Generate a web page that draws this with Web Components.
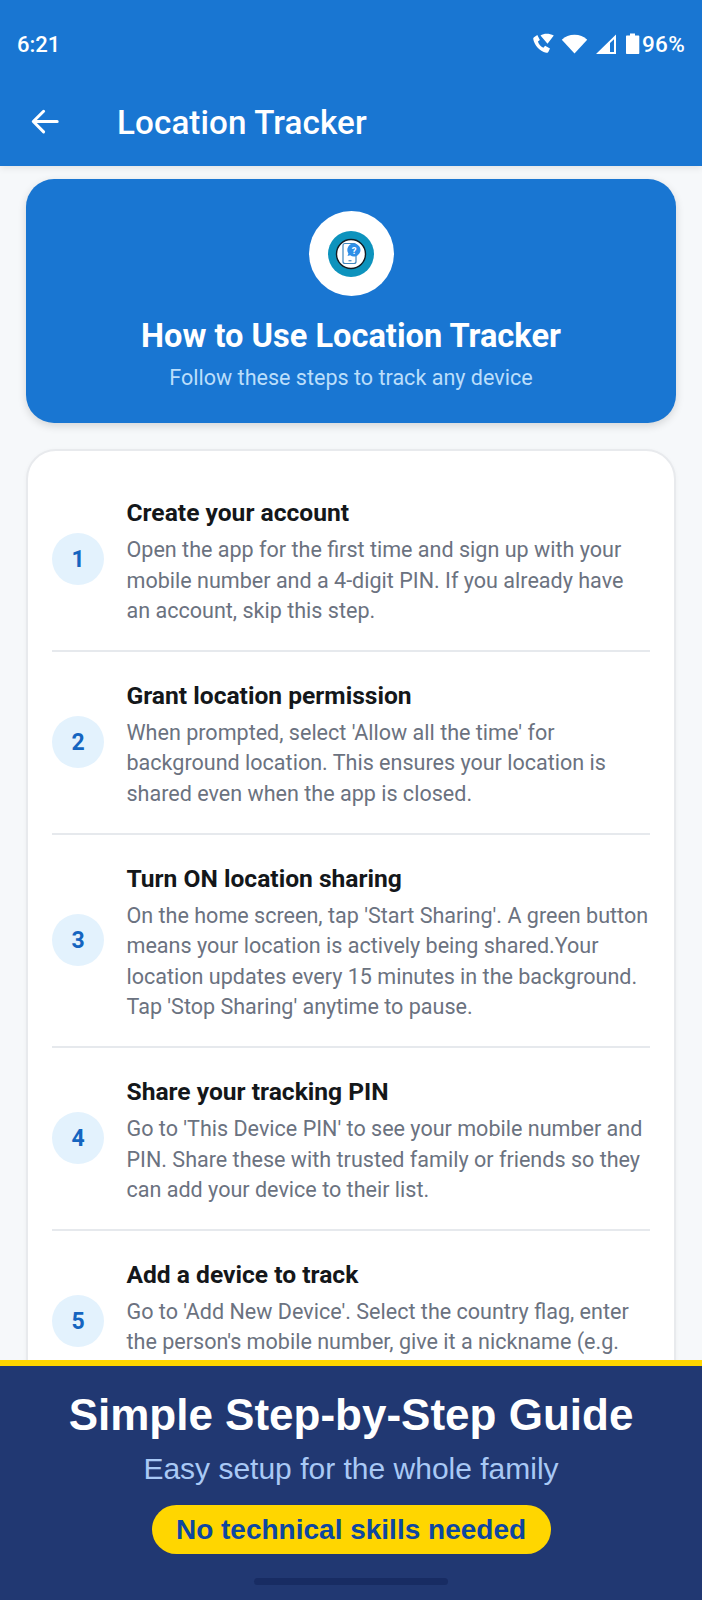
<!DOCTYPE html>
<html>
<head>
<meta charset="utf-8">
<style>
  html, body { margin: 0; padding: 0; background: #f6f8fa; }
  body { font-family: Roboto, sans-serif; width: 702px; height: 1600px; overflow: hidden; }
  #page { display: flex; flex-direction: column; height: 1600px; }
</style>
</head>
<body>
<div id="page">
  <status-bar time="6:21" battery="96%"></status-bar>
  <app-bar title="Location Tracker"></app-bar>
  <guide-content>
    <hero-card heading="How to Use Location Tracker" sub="Follow these steps to track any device"></hero-card>
    <steps-card>
      <guide-step num="1" heading="Create your account">Open the app for the first time and sign up with your mobile number and a 4-digit PIN. If you already have an account, skip this step.</guide-step>
      <guide-step num="2" heading="Grant location permission">When prompted, select 'Allow all the time' for background location. This ensures your location is shared even when the app is closed.</guide-step>
      <guide-step num="3" heading="Turn ON location sharing">On the home screen, tap 'Start Sharing'. A green button means your location is actively being shared.Your location updates every 15 minutes in the background. Tap 'Stop Sharing' anytime to pause.</guide-step>
      <guide-step num="4" heading="Share your tracking PIN">Go to 'This Device PIN' to see your mobile number and PIN. Share these with trusted family or friends so they can add your device to their list.</guide-step>
      <guide-step num="5" heading="Add a device to track">Go to 'Add New Device'. Select the country flag, enter the person's mobile number, give it a nickname (e.g.</guide-step>
    </steps-card>
  </guide-content>
  <promo-footer heading="Simple Step-by-Step Guide" sub="Easy setup for the whole family" pill="No technical skills needed"></promo-footer>
</div>

<script>
  function define(name, html) {
    const template = document.createElement('template');
    template.innerHTML = html;
    customElements.define(name, class extends HTMLElement {
      connectedCallback() {
        if (this.shadowRoot) return;
        this.attachShadow({ mode: 'open' });
        this.shadowRoot.appendChild(template.content.cloneNode(true));
        this.shadowRoot.querySelectorAll('[data-attr]').forEach((el) => {
          el.textContent = this.getAttribute(el.dataset.attr);
        });
      }
    });
  }

  define('status-bar', `
    <style>
      :host { display: flex; align-items: center; justify-content: space-between; height: 88px; padding: 0 17px; background: #1976d2; color: #fff; flex: none; box-sizing: border-box; position: relative; z-index: 2; }
      .time { font-size: 22px; font-weight: 500; }
      .icons { display: flex; align-items: center; font-size: 22.500px; font-weight: 500; letter-spacing: .3px; }
      svg { display: block; fill: #fff; }
    </style>
    <span class="time" data-attr="time"></span>
    <span class="icons">
      <!-- call + small wifi -->
      <svg width="24" height="24" viewBox="0 0 24 24" style="margin-right:5px">
        <path d="M2 5.200 5.300 3l2.600 5-2 1.600c.8 2.700 2.900 5.100 5.500 6.200l1.700-2 4.900 2.800-1.700 3.400c-.5.700-1.300 1-2.200.8C7.500 19.100 2.100 12.900 1.200 6.800 1.100 6.200 1.500 5.600 2 5.200Z"/>
        <path d="M8.500 3.600C11.900 1 17.200 1 21.800 3.600l-6.300 8.200-7-8.200Z"/>
      </svg>
      <!-- wifi -->
      <svg width="27" height="24" viewBox="0 0 27 24" style="margin-right:7px"><path d="M13.500 21.500.8 7.700C4.200 4.500 8.500 2.700 13.500 2.700s9.300 1.800 12.700 5L13.500 21.500Z"/></svg>
      <!-- cell signal -->
      <svg width="22" height="24" viewBox="0 0 22 24" style="margin-right:9px"><path fill-rule="evenodd" d="M21 2.500V22H1L21 2.500ZM15 11 19 7.200V20H15V11Z"/></svg>
      <!-- battery -->
      <svg width="14" height="24" viewBox="0 0 14 24" style="margin-right:2px"><path d="M4 1.500h5v2h3.300c.6 0 1 .4 1 1V21c0 .6-.4 1-1 1H1c-.6 0-1-.4-1-1V4.500c0-.6.4-1 1-1h3v-2Z"/></svg>
      <span data-attr="battery"></span>
    </span>
  `);

  define('app-bar', `
    <style>
      :host { display: flex; align-items: center; height: 78px; padding-bottom: 10px; box-sizing: border-box; background: #1976d2; color: #fff; flex: none; position: relative; z-index: 1; box-shadow: 0 2px 7px rgba(0,0,0,.09); }
      svg { display: block; margin-left: 30px; flex: none; }
      .title { margin-left: 57px; font-size: 33.200px; font-weight: 500; letter-spacing: .1px; }
    </style>
    <svg width="30" height="30" viewBox="0 0 32 32" fill="none" stroke="#fff" stroke-width="3.200" stroke-linecap="round" stroke-linejoin="round"><path d="M29 15.500H4M14.500 4.500 3.500 15.500l11 11"/></svg>
    <span class="title" data-attr="title"></span>
  `);

  define('guide-content', `
    <style>
      :host { display: flex; flex-direction: column; flex: 1 1 0; min-height: 0; overflow: hidden; padding: 13px 26px 0; gap: 26px; box-sizing: border-box; background: #f6f8fa; }
    </style>
    <slot></slot>
  `);

  define('hero-card', `
    <style>
      :host { display: flex; flex-direction: column; align-items: center; flex: none; height: 244px; box-sizing: border-box; padding-top: 32px; background: #1976d2; border-radius: 28px; color: #fff; box-shadow: 0 3px 8px rgba(0,0,0,.14); }
      .badge { width: 85px; height: 85px; border-radius: 50%; background: #fff; display: flex; align-items: center; justify-content: center; }
      svg { display: block; }
      h1 { margin: 20px 0 0; font-size: 32.600px; line-height: 40px; font-weight: 700; }
      p { margin: 7px 0 0; font-size: 21.550px; line-height: 30px; color: #bbdefb; }
    </style>
    <div class="badge">
      <svg width="46" height="46" viewBox="0 0 46 46">
        <circle cx="23" cy="23" r="23" fill="#0d93bd"/>
        <circle cx="23" cy="23" r="14.500" fill="#fff" stroke="#111c24" stroke-width="1.400"/>
        <rect x="15" y="12.500" width="13" height="20" rx="2" fill="#fff" stroke="#3f87bf" stroke-width="1.200"/>
        <rect x="20.500" y="29.200" width="3" height="1.100" fill="#3f87bf"/>
        <path d="M26 12.500a6.500 6.500 0 1 1-3.800 11.800l-2.700.8.900-2.600A6.500 6.500 0 0 1 26 12.500Z" fill="#2f8fe8"/>
        <text x="26" y="23" text-anchor="middle" font-family="Roboto, sans-serif" font-size="9.500" font-weight="700" fill="#fff">?</text>
      </svg>
    </div>
    <h1 data-attr="heading"></h1>
    <p data-attr="sub"></p>
  `);

  define('steps-card', `
    <style>
      :host { display: block; flex: none; box-sizing: border-box; padding: 18px 24px 60px; background: #fff; border: 2px solid #e8eaed; border-radius: 30px; box-shadow: 0 1px 4px rgba(0,0,0,.04); }
      ::slotted(guide-step:not(:last-child)) { border-bottom: 2px solid #e6e9ed; }
    </style>
    <slot></slot>
  `);

  define('guide-step', `
    <style>
      :host { display: flex; align-items: center; gap: 22.500px; padding: 23px 0; box-sizing: border-box; }
      .num { flex: none; width: 52px; height: 52px; border-radius: 50%; background: #e3f2fd; color: #1565c0; display: flex; align-items: center; justify-content: center; font-size: 23px; font-weight: 700; }
      .body { min-width: 0; flex: 1; padding-top: 6px; }
      /* last step is cut by the footer, keep the row as tall as a three line one */
      :host(:last-child) .body { min-height: 128.800px; }
      h2 { margin: 0 0 7px; font-size: 24.600px; line-height: 30px; font-weight: 700; color: #14171a; }
      p { margin: 0; font-size: 21.550px; line-height: 30.600px; color: #6b7280; }
    </style>
    <div class="num" data-attr="num"></div>
    <div class="body">
      <h2 data-attr="heading"></h2>
      <p><slot></slot></p>
    </div>
  `);

  define('promo-footer', `
    <style>
      :host { display: flex; flex-direction: column; align-items: center; flex: none; height: 240px; box-sizing: border-box; border-top: 6px solid #ffd600; background: #213872; font-family: "Liberation Sans", Arial, sans-serif; position: relative; z-index: 1; }
      h1 { margin: 24px 0 0; font-size: 44px; line-height: 50px; font-weight: 700; color: #fff; }
      p { margin: 11px 0 0; font-size: 30px; line-height: 36px; color: #a9c9f5; }
      .pill { margin-top: 18px; height: 49px; width: 399px; display: flex; align-items: center; justify-content: center; border-radius: 25px; background: #ffd600; color: #0d47a1; font-size: 28px; font-weight: 700; }
      .home { margin-top: 24px; width: 194px; height: 7px; border-radius: 4px; background: #182c63; }
    </style>
    <h1 data-attr="heading"></h1>
    <p data-attr="sub"></p>
    <div class="pill" data-attr="pill"></div>
    <div class="home"></div>
  `);
</script>
</body>
</html>
